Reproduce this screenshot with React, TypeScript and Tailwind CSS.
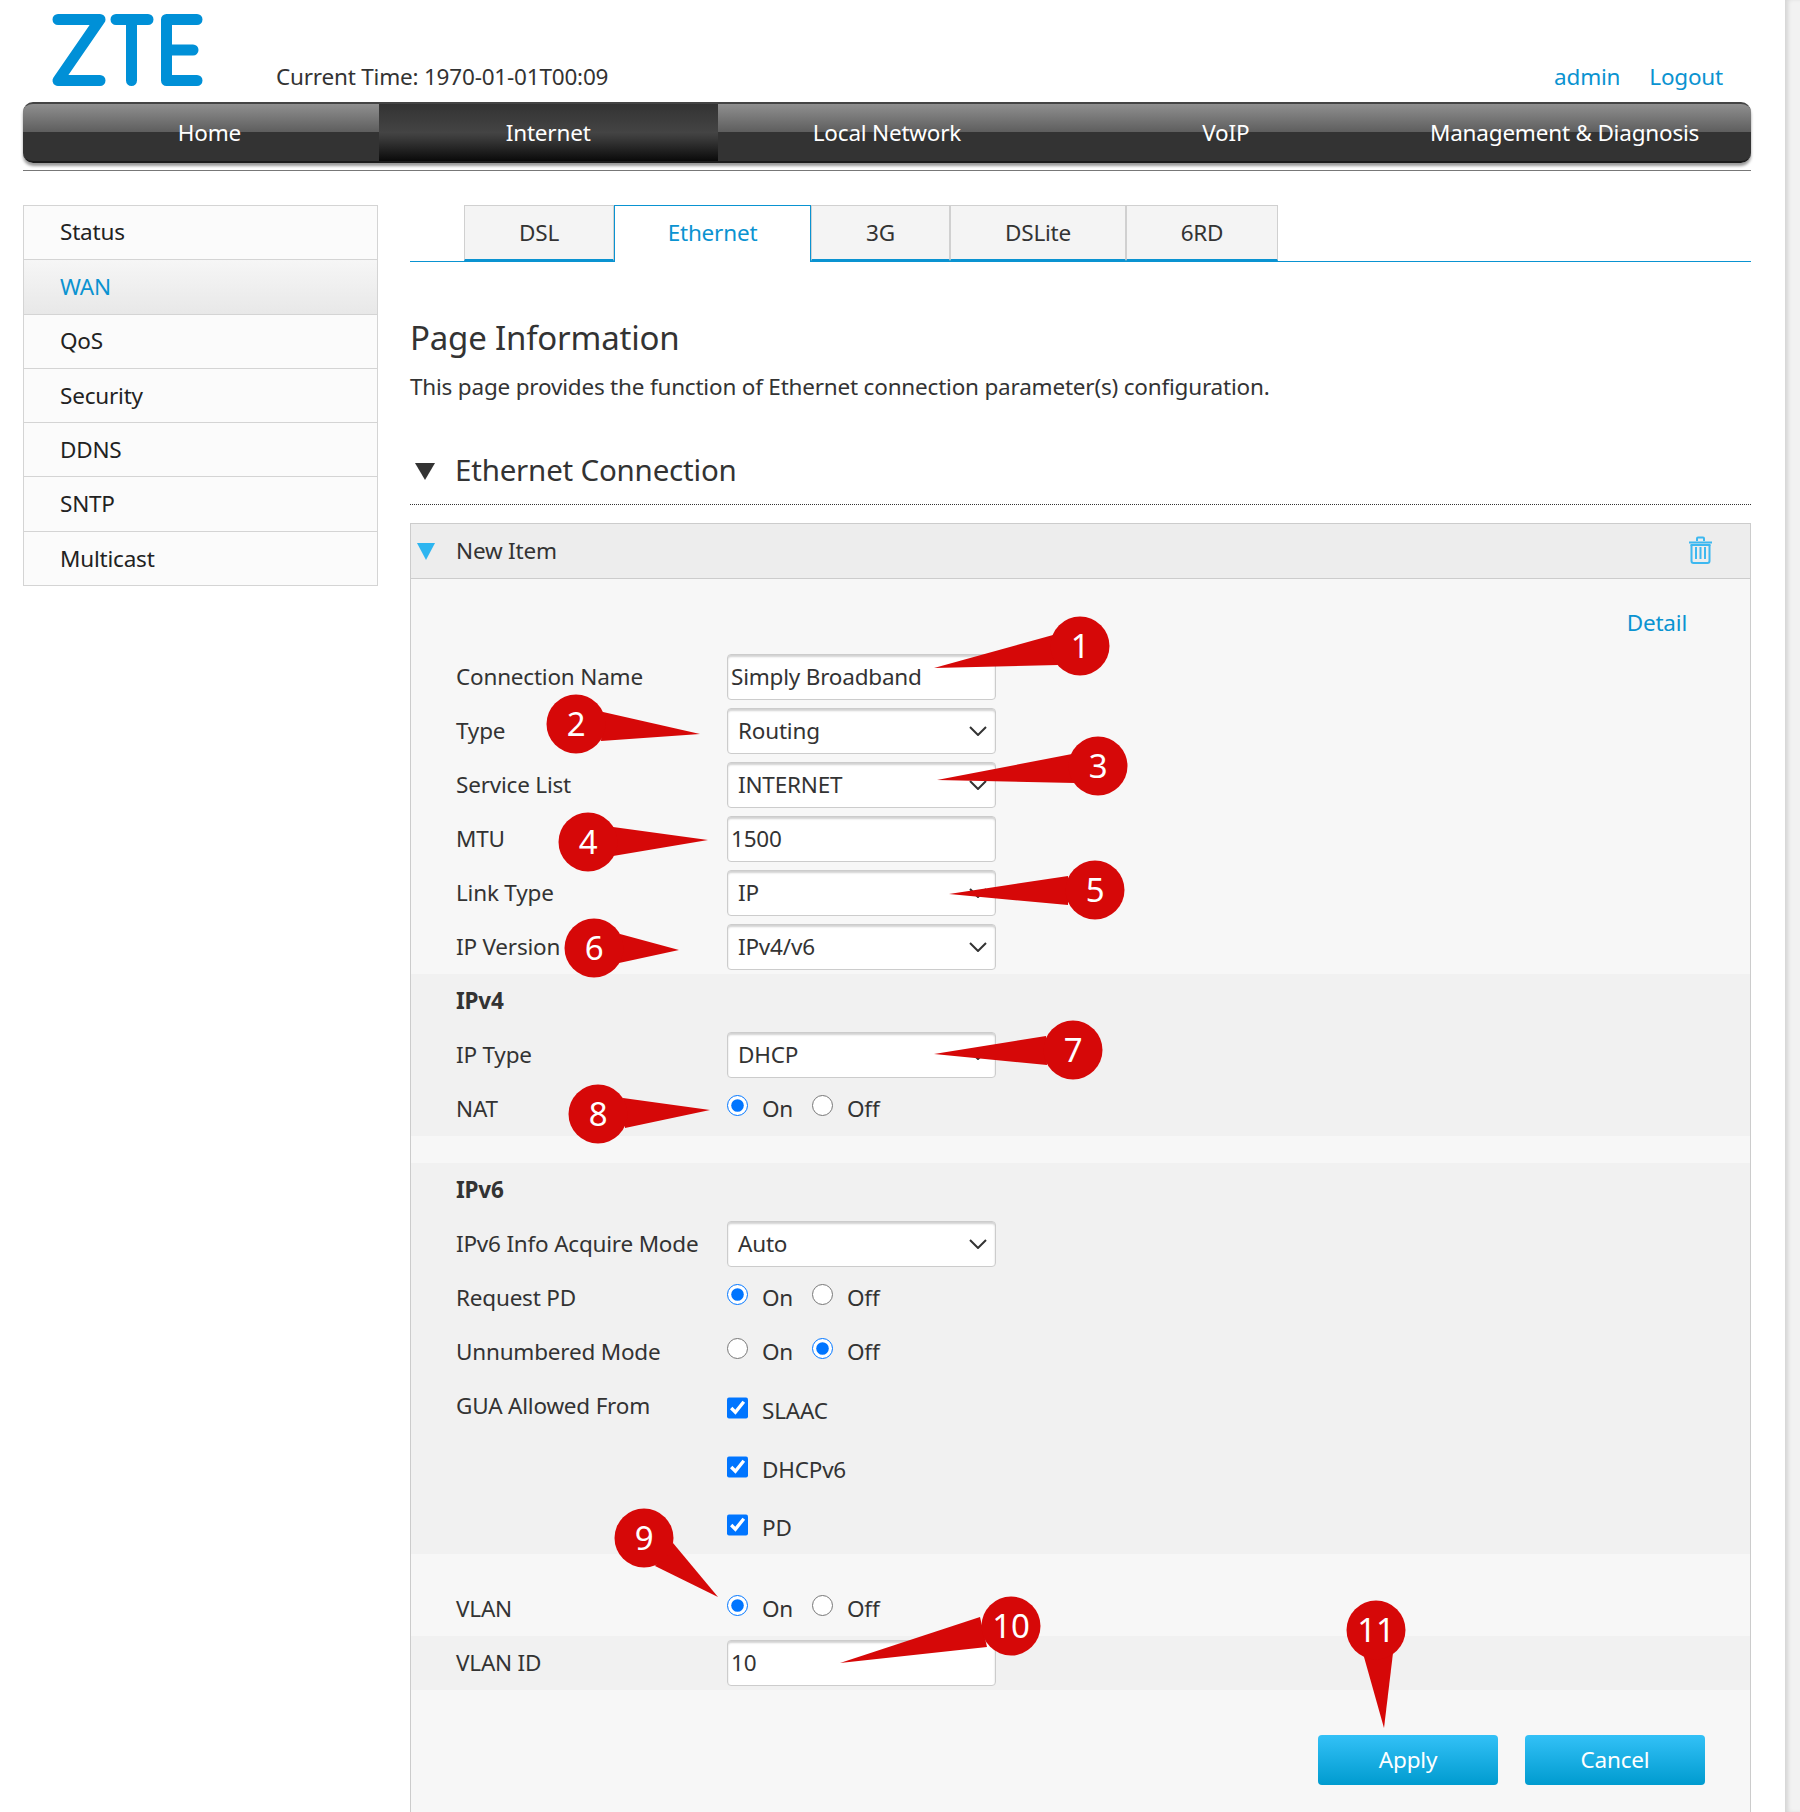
import type { ReactNode } from 'react'

const menu = ['Status', 'WAN', 'QoS', 'Security', 'DDNS', 'SNTP', 'Multicast']

const tabs = [
  { name: 'DSL', width: 'w-[150px]' },
  { name: 'Ethernet', width: 'w-[197px]' },
  { name: '3G', width: 'w-[139px]' },
  { name: 'DSLite', width: 'w-[176px]' },
  { name: '6RD', width: 'w-[152px]' },
]

// x, y = circle centre, tip = arrow point, a and b = where the arrow leaves the circle
const callouts = [
  { n: '1', x: 1080, y: 646, tip: '934,668', a: '1053,635', b: '1058,665' },
  { n: '2', x: 576, y: 724, tip: '700,734', a: '603,712', b: '601,741' },
  { n: '3', x: 1098, y: 766, tip: '937,780', a: '1072,754', b: '1075,783' },
  { n: '4', x: 588, y: 842, tip: '708,840', a: '613,827', b: '613,856' },
  { n: '5', x: 1095, y: 890, tip: '949,894', a: '1068,876', b: '1068,905' },
  { n: '6', x: 594, y: 948, tip: '679,950', a: '620,934', b: '619,963' },
  { n: '7', x: 1073, y: 1050, tip: '934,1054', a: '1046,1036', b: '1047,1065' },
  { n: '8', x: 598, y: 1114, tip: '710,1110', a: '623,1098', b: '625,1128' },
  { n: '9', x: 644, y: 1538, tip: '718,1597', a: '673,1543', b: '655,1566' },
  { n: '10', x: 1011, y: 1626, tip: '840,1663', a: '980,1617', b: '987,1647' },
  { n: '11', x: 1376, y: 1630, tip: '1384,1728', a: '1364,1657', b: '1393,1653' },
]

function Row({ label, children, className = '' }: { label?: string; children?: ReactNode; className?: string }) {
  return (
    <div className={`flex h-[54px] items-center pl-[45px] ${className}`}>
      <div className="w-[271px] shrink-0">{label}</div>
      {children}
    </div>
  )
}

function TextInput({ value }: { value: string }) {
  return (
    <div className="flex h-[46px] w-[269px] items-center rounded-[4px] border border-[#ccc] bg-white pl-[3px] shadow-[inset_0_2px_2px_rgba(0,0,0,0.18)]">
      {value}
    </div>
  )
}

function Select({ value }: { value: string }) {
  return (
    <div className="flex h-[46px] w-[269px] items-center justify-between rounded-[4px] border border-[#ccc] bg-white pl-[10px] pr-[8px] shadow-[inset_0_2px_2px_rgba(0,0,0,0.18)]">
      {value}
      <svg width="18" height="10" viewBox="0 0 18 10" fill="none" stroke="#333" strokeWidth="2">
        <path d="M1 1l8 8 8-8" />
      </svg>
    </div>
  )
}

function Radios({ name, on }: { name: string; on: boolean }) {
  return (
    <div className="flex items-center">
      <input type="radio" name={name} defaultChecked={on} className="mb-[7px] h-[21px] w-[21px]" />
      <span className="ml-[14px] w-[50px]">On</span>
      <input type="radio" name={name} defaultChecked={!on} className="mb-[7px] h-[21px] w-[21px]" />
      <span className="ml-[14px]">Off</span>
    </div>
  )
}

function Check({ label }: { label: string }) {
  return (
    <div className="flex h-[58.5px] items-start pl-[316px]">
      <input type="checkbox" defaultChecked className="mt-[1px] h-[22px] w-[21px]" />
      <span className="ml-[14px] leading-[30px]">{label}</span>
    </div>
  )
}

export default function App() {
  return (
    <div className="relative flex h-[1812px] w-[1800px] overflow-hidden bg-white font-['Noto_Sans','Open_Sans',sans-serif] text-[22.5px] tracking-[-0.2px] text-[#333]">
      <div className="w-[1785px] shrink-0 pl-[23px] pr-[34px]">
        <div className="flex h-[102px] items-start">
          <svg className="ml-[27px] mt-[14px]" width="153" height="72" viewBox="50 14 153 72" fill="none" stroke="#0090d7" strokeWidth="11" strokeLinecap="round" strokeLinejoin="round">
            <path d="M58 19.500H100L58 80.500H100" />
            <path d="M116 19.500H148M131.500 19.500V80.500" />
            <path d="M197 19.500H166.500V80.500H197M166.500 50H193" />
          </svg>
          <div className="ml-[73px] mt-[59px] leading-[36px]">Current Time: 1970-01-01T00:09</div>
          <div className="ml-auto mr-[28px] mt-[59px] flex gap-[29px] leading-[36px] text-[#0a93d1]">
            <span>admin</span>
            <span>Logout</span>
          </div>
        </div>

        <div className="flex h-[61px] rounded-[10px] border-t-2 border-b-2 border-t-[#444] border-b-[#1c1c1c] bg-[linear-gradient(#8f8f8f_0%,#5d5d5d_50%,#333_50%,#333_100%)] px-[17px] shadow-[0_3px_3px_rgba(0,0,0,0.4)]">
          {['Home', 'Internet', 'Local Network', 'VoIP', 'Management & Diagnosis'].map((item) => (
            <div
              key={item}
              className={`flex w-[339px] items-center justify-center text-white ${
                item === 'Internet' ? 'bg-[linear-gradient(#333_0%,#444_50%,#3a3a3a_60%,#0a0a0a_100%)]' : ''
              }`}
            >
              {item}
            </div>
          ))}
        </div>
        <div className="mt-[7px] h-px bg-[#777]" />

        <div className="mt-[34px] flex">
          <div className="h-[381px] w-[355px] shrink-0 overflow-hidden border border-[#d4d4d4] bg-[#fbfbfb]">
            {menu.map((item, i) => (
              <div
                key={item}
                className={`flex h-[54.3px] items-center pl-[36px] ${i > 0 ? 'border-t border-[#d4d4d4]' : '-mt-px'} ${
                  item === 'WAN' ? 'bg-[linear-gradient(#f6f6f6,#e8e8e8)] text-[#0a93d1]' : 'text-[#222]'
                }`}
              >
                {item}
              </div>
            ))}
          </div>

          <div className="ml-[32px] w-[1341px]">
            <div className="flex h-[57px] border-b border-[#0a93d1] pl-[54px]">
              {tabs.map((tab) =>
                tab.name === 'Ethernet' ? (
                  <div key={tab.name} className={`flex ${tab.width} -mb-px items-center justify-center border border-b-0 border-[#0a93d1] bg-white pb-[3px] text-[#0a93d1]`}>
                    {tab.name}
                  </div>
                ) : (
                  <div key={tab.name} className={`flex ${tab.width} items-center justify-center border-t border-r border-l border-b-2 border-[#d0d0d0] border-b-[#0a93d1] bg-[#f4f4f4]`}>
                    {tab.name}
                  </div>
                ),
              )}
            </div>

            <h2 className="mt-[54px] text-[33px] leading-[44px]">Page Information</h2>
            <p className="mt-[11px] leading-[32px]">This page provides the function of Ethernet connection parameter(s) configuration.</p>

            <div className="mt-[33px] flex h-[69px] items-center border-b border-dotted border-[#333]">
              <svg className="ml-[5px] mt-[3px]" width="20" height="17" viewBox="0 0 20 17">
                <path d="M0 0h20L10 17z" fill="#333" />
              </svg>
              <span className="ml-[20px] text-[29.500px]">Ethernet Connection</span>
            </div>

            <div className="mt-[18px] h-[1300px] border border-b-0 border-[#ccc] bg-[#f7f7f7]">
              <div className="flex h-[55px] items-center border-b border-[#ccc] bg-[#ededed]">
                <svg className="ml-[6px]" width="18" height="17" viewBox="0 0 18 17">
                  <path d="M0 0h18L9 17z" fill="#2db5f0" />
                </svg>
                <span className="ml-[21px]">New Item</span>
                <svg className="mb-[2px] ml-auto mr-[37px]" width="25" height="28" viewBox="0 0 25 28" fill="none" stroke="#3db8f0" strokeWidth="2">
                  <path d="M1 6.500h23M2.500 9h20M9 5V2.500q0-1 1-1h5q1 0 1 1V5" />
                  <path d="M3.500 9v16q0 2 2 2h14q2 0 2-2V9" />
                  <path d="M8 11v12M12.500 11v12M17 11v12" />
                </svg>
              </div>

              <div className="flex h-[71px] items-end justify-end pb-[10px] pr-[63px] text-[#0a93d1]">Detail</div>

              <Row label="Connection Name"><TextInput value="Simply Broadband" /></Row>
              <Row label="Type"><Select value="Routing" /></Row>
              <Row label="Service List"><Select value="INTERNET" /></Row>
              <Row label="MTU"><TextInput value="1500" /></Row>
              <Row label="Link Type"><Select value="IP" /></Row>
              <Row label="IP Version"><Select value="IPv4/v6" /></Row>

              <div className="bg-[#f1f1f1]">
                <Row><div className="absolute font-bold">IPv4</div></Row>
                <Row label="IP Type"><Select value="DHCP" /></Row>
                <Row label="NAT"><Radios name="nat" on /></Row>
              </div>

              <div className="mt-[27px] h-[391px] bg-[#f1f1f1]">
                <Row><div className="absolute font-bold">IPv6</div></Row>
                <Row label="IPv6 Info Acquire Mode"><Select value="Auto" /></Row>
                <Row label="Request PD"><Radios name="pd" on /></Row>
                <Row label="Unnumbered Mode"><Radios name="unnumbered" on={false} /></Row>
                <div className="relative pt-[17px]">
                  <div className="absolute left-[45px] top-[9px] leading-[36px]">GUA Allowed From</div>
                  <Check label="SLAAC" />
                  <Check label="DHCPv6" />
                  <Check label="PD" />
                </div>
              </div>

              <Row label="VLAN" className="mt-[28px]"><Radios name="vlan" on /></Row>
              <Row label="VLAN ID" className="bg-[#f1f1f1]"><TextInput value="10" /></Row>

              <div className="mt-[45px] flex justify-end gap-[27px] pr-[45px] text-white">
                <div className="flex h-[50px] w-[180px] items-center justify-center rounded-[4px] bg-[linear-gradient(#33c1f7,#009bcf)]">Apply</div>
                <div className="flex h-[50px] w-[180px] items-center justify-center rounded-[4px] bg-[linear-gradient(#33c1f7,#009bcf)]">Cancel</div>
              </div>
            </div>
          </div>
        </div>
      </div>

      <div className="flex-1 bg-[#f2f2f2] shadow-[inset_4px_0_4px_-1px_rgba(0,0,0,0.12)]" />

      <svg className="absolute left-0 top-0" width="1800" height="1812" viewBox="0 0 1800 1812">
        {callouts.map((c) => (
          <g key={c.n}>
            <polygon points={`${c.tip} ${c.a} ${c.b}`} fill="#d60808" />
            <circle cx={c.x} cy={c.y} r="29.500" fill="#d60808" />
            <text x={c.x} y={c.y + 12} textAnchor="middle" fontSize="33" fill="white">
              {c.n}
            </text>
          </g>
        ))}
      </svg>
    </div>
  )
}
